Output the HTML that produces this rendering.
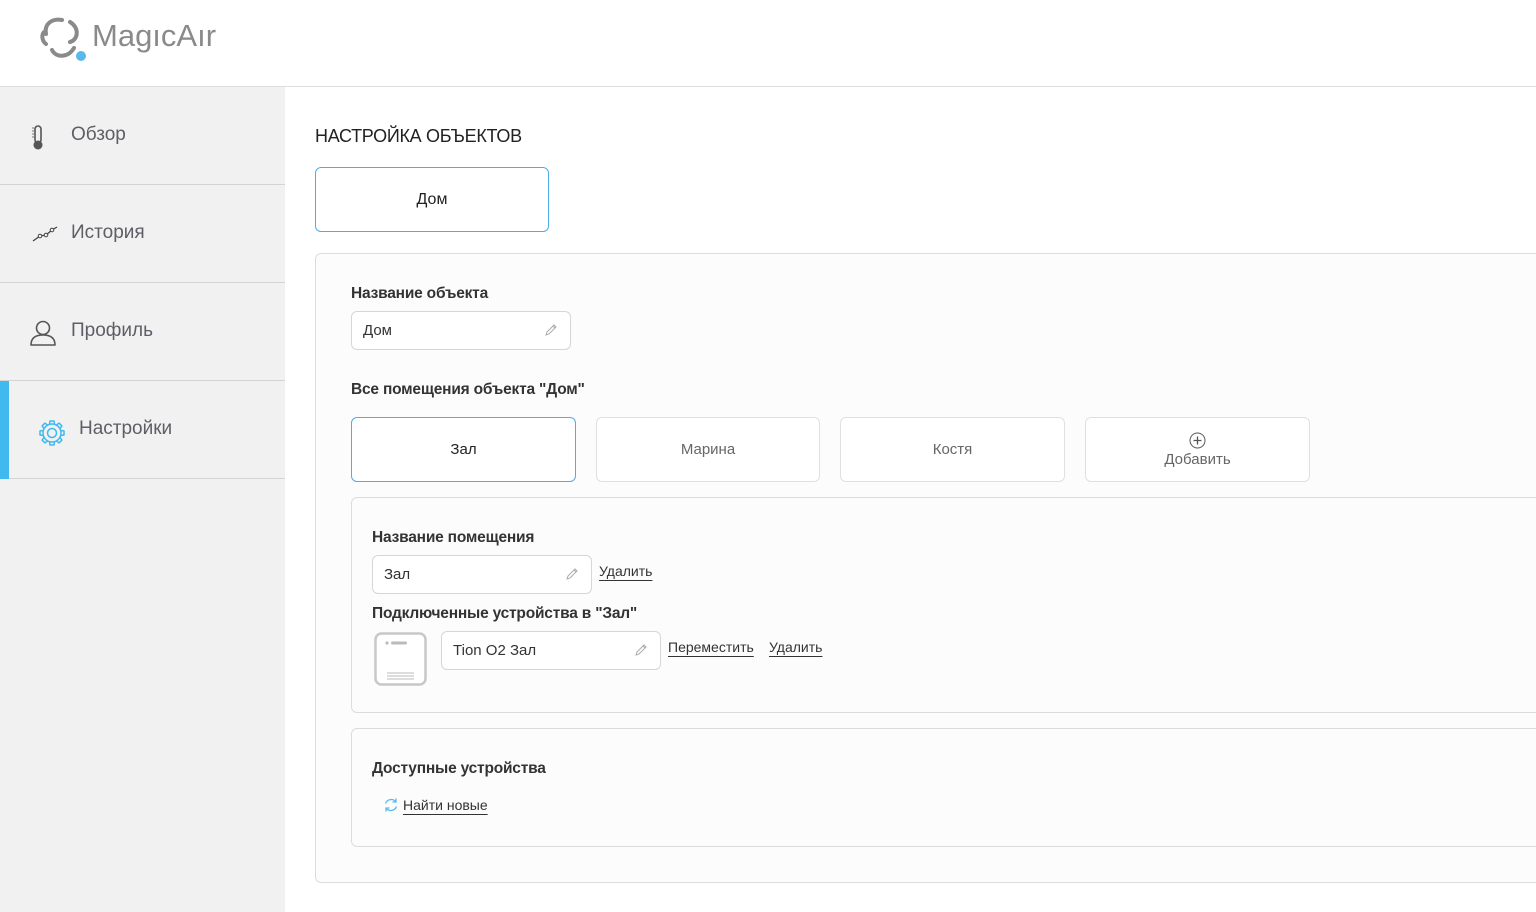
<!DOCTYPE html>
<html><head><meta charset="utf-8"><style>
*{box-sizing:border-box;margin:0;padding:0}
body{width:1536px;height:912px;overflow:hidden;background:#fff;font-family:"Liberation Sans",sans-serif;color:#222;position:relative}
.a{position:absolute}
.hdr{left:0;top:0;width:1536px;height:87px;border-bottom:1px solid #ddd;background:#fff}
.side{left:0;top:87px;width:285px;height:825px;background:#f1f1f1}
.nav{position:absolute;left:0;width:285px;height:98px;border-bottom:1px solid #d4d4d4;font-size:19px;color:#5e5e66}
.nav span{position:absolute;left:71px;top:37px}
.box{position:absolute;border:1px solid #dcdcdc;border-radius:6px;background:#fcfcfc}
.btn{position:absolute;border:1px solid #e0e0e4;border-radius:6px;background:#fff;font-size:15px;color:#666;text-align:center}
.sel{border-color:#4aaee8;color:#222}
.inp{position:absolute;border:1px solid #d6d6d6;border-radius:6px;background:#fff;height:39px;font-size:15px;color:#333;padding:10px 11px}
.pen{position:absolute;right:12px;top:11px}
h3{position:absolute;font-size:15.5px;font-weight:bold;color:#333;letter-spacing:-0.2px;top:1px}
.lnk{position:absolute;font-size:14px;color:#333;text-decoration:underline;text-underline-offset:4px}
</style></head><body>
<div class="a hdr">
<svg class="a" style="left:38px;top:16px" width="50" height="46" viewBox="0 0 50 46"><g fill="none" stroke="#8a8a8a" stroke-width="4" stroke-linecap="round"><path d="M24 4 C14 2 6 8 8 18"/><path d="M32 6 C42 12 40 24 32 26"/><path d="M36 32 C30 42 18 42 14 34"/><path d="M8 28 C3 24 4 18 6 16"/></g><circle cx="43" cy="40" r="5" fill="#5ab8ec"/></svg>
<div class="a" style="left:92px;top:18px;font-size:31px;color:#8a8a8a">MagıcAır</div>
</div>
<div class="a side">
<div class="nav" style="top:0"><svg class="a" style="left:30px;top:38px" width="16" height="26" viewBox="0 0 16 26"><rect x="5" y="1" width="6" height="17" rx="3" fill="none" stroke="#555" stroke-width="1.6"/><circle cx="8" cy="20" r="4.5" fill="#555"/><path d="M2 3h2M2 6h2M2 9h2M2 12h2" stroke="#777"/></svg><span>Обзор</span></div>
<div class="nav" style="top:98px"><svg class="a" style="left:32px;top:40px" width="26" height="18" viewBox="0 0 26 18"><path d="M1 16 L8 11 L14 10 L20 5 L25 2" fill="none" stroke="#444" stroke-width="1.3"/><circle cx="8" cy="11" r="1.8" fill="#f1f1f1" stroke="#444"/><circle cx="14" cy="10" r="1.8" fill="#f1f1f1" stroke="#444"/><circle cx="20" cy="5" r="1.8" fill="#f1f1f1" stroke="#444"/></svg><span>История</span></div>
<div class="nav" style="top:196px"><svg class="a" style="left:29px;top:36px" width="28" height="28" viewBox="0 0 28 28"><circle cx="14" cy="9" r="6.5" fill="none" stroke="#555" stroke-width="1.6"/><path d="M2 26 C2 18 8 16 14 16 C20 16 26 18 26 26 Z" fill="none" stroke="#555" stroke-width="1.6" stroke-linejoin="round"/></svg><span>Профиль</span></div>
<div class="nav" style="top:294px"><div class="a" style="left:0;top:0;width:9px;height:98px;background:#3fb9ee"></div><svg class="a" style="left:38px;top:38px" width="28" height="28" viewBox="0 0 28 28"><g fill="none" stroke="#3fb9ee" stroke-width="1.5" stroke-linejoin="round"><circle cx="14" cy="14" r="9"/><g id="t"><path d="M11.5 5.3 L12 2 H16 L16.5 5.3"/></g><path d="M11.5 5.3 L12 2 H16 L16.5 5.3" transform="rotate(45 14 14)"/><path d="M11.5 5.3 L12 2 H16 L16.5 5.3" transform="rotate(90 14 14)"/><path d="M11.5 5.3 L12 2 H16 L16.5 5.3" transform="rotate(135 14 14)"/><path d="M11.5 5.3 L12 2 H16 L16.5 5.3" transform="rotate(180 14 14)"/><path d="M11.5 5.3 L12 2 H16 L16.5 5.3" transform="rotate(225 14 14)"/><path d="M11.5 5.3 L12 2 H16 L16.5 5.3" transform="rotate(270 14 14)"/><path d="M11.5 5.3 L12 2 H16 L16.5 5.3" transform="rotate(315 14 14)"/><circle cx="14" cy="14" r="4.5"/></g></svg><span style="left:79px">Настройки</span></div>
</div>
<div class="a" style="left:315px;top:126px;font-size:18px;color:#222;letter-spacing:-0.3px">НАСТРОЙКА ОБЪЕКТОВ</div>
<div class="btn sel" style="left:315px;top:167px;width:234px;height:65px;line-height:63px;font-size:16px">Дом</div>
<div class="box" style="left:315px;top:253px;width:1240px;height:630px"></div>
<h3 style="left:351px;top:285px">Название объекта</h3>
<div class="inp" style="left:351px;top:311px;width:220px">Дом<svg class="pen" width="14" height="14" viewBox="0 0 14 14"><path d="M2 12 L3 9 L10 2 L12 4 L5 11 Z M9 3 L11 5" fill="none" stroke="#aaa"/></svg></div>
<h3 style="left:351px;top:381px">Все помещения объекта "Дом"</h3>
<div class="btn sel" style="left:351px;top:417px;width:225px;height:65px;line-height:63px">Зал</div>
<div class="btn" style="left:596px;top:417px;width:224px;height:65px;line-height:63px">Марина</div>
<div class="btn" style="left:840px;top:417px;width:225px;height:65px;line-height:63px">Костя</div>
<div class="btn" style="left:1085px;top:417px;width:225px;height:65px"><svg class="a" style="left:103px;top:14px" width="17" height="17" viewBox="0 0 17 17"><circle cx="8.5" cy="8.5" r="7.5" fill="none" stroke="#555"/><path d="M8.5 4.5v8M4.5 8.5h8" stroke="#555" stroke-width="1.3"/></svg><div class="a" style="left:0;right:0;top:33px">Добавить</div></div>
<div class="box" style="left:351px;top:497px;width:1200px;height:216px"></div>
<h3 style="left:372px;top:529px">Название помещения</h3>
<div class="inp" style="left:372px;top:555px;width:220px">Зал<svg class="pen" width="14" height="14" viewBox="0 0 14 14"><path d="M2 12 L3 9 L10 2 L12 4 L5 11 Z M9 3 L11 5" fill="none" stroke="#aaa"/></svg></div>
<div class="lnk" style="left:599px;top:563px">Удалить</div>
<h3 style="left:372px;top:605px">Подключенные устройства в "Зал"</h3>
<svg class="a" style="left:374px;top:632px" width="53" height="54" viewBox="0 0 53 54"><rect x="1.5" y="1.5" width="50" height="51" rx="6" fill="#fff" stroke="#c8c8c8" stroke-width="2.5"/><circle cx="13" cy="11" r="1.6" fill="#bbb"/><rect x="17" y="9.5" width="16" height="3" rx="1.5" fill="#bbb"/><path d="M13 41h27M13 44h27M13 47h27" stroke="#bbb"/></svg>
<div class="inp" style="left:441px;top:631px;width:220px">Tion O2 Зал<svg class="pen" width="14" height="14" viewBox="0 0 14 14"><path d="M2 12 L3 9 L10 2 L12 4 L5 11 Z M9 3 L11 5" fill="none" stroke="#aaa"/></svg></div>
<div class="lnk" style="left:668px;top:639px">Переместить</div>
<div class="lnk" style="left:769px;top:639px">Удалить</div>
<div class="box" style="left:351px;top:728px;width:1200px;height:119px"></div>
<h3 style="left:372px;top:760px">Доступные устройства</h3>
<svg class="a" style="left:383px;top:797px" width="16" height="16" viewBox="0 0 16 16"><path d="M2.5 6.5 A6 6 0 0 1 13 5 M13.5 9.5 A6 6 0 0 1 3 11" fill="none" stroke="#5ab8ec" stroke-width="1.3"/><path d="M13 1.5v3.5h-3.5M3 14.5v-3.5h3.5" fill="none" stroke="#5ab8ec" stroke-width="1.3"/></svg>
<div class="lnk" style="left:403px;top:797px">Найти новые</div>
</body></html>
